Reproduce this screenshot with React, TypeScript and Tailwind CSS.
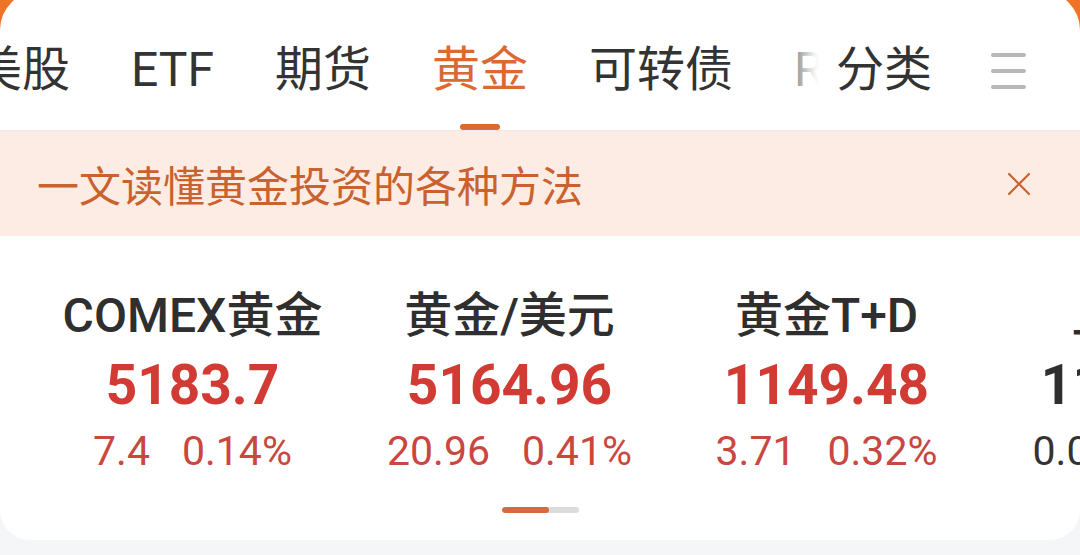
import React from 'react';

const tabs = ['美股', 'ETF', '期货', '黄金', '可转债', 'REITs'];

const quotes = [
  { name: 'COMEX黄金', price: '5183.7', change: '7.4', pct: '0.14%', up: true },
  { name: '黄金/美元', price: '5164.96', change: '20.96', pct: '0.41%', up: true },
  { name: '黄金T+D', price: '1149.48', change: '3.71', pct: '0.32%', up: true },
  { name: '上海金', price: '1150.20', change: '0.00', pct: '0.00%', up: false },
];

const font = { fontFamily: 'Roboto, "Noto Sans CJK SC", sans-serif' };

const App: React.FC = () => {
  return (
    <div
      className="h-[555px] w-[1080px] overflow-hidden bg-[linear-gradient(#ef7428_0px,#ef7428_40px,#f5f6f8_40px)]"
      style={font}
    >
      <div className="-mt-[9px] h-[549px] bg-white rounded-t-[39px] rounded-b-[30px] overflow-hidden flex flex-col">
        {/* Tabs */}
        <div className="relative h-[140px] shrink-0 border-b border-[#ececec] pt-[18px] flex items-center">
          <div className="relative w-[826px] shrink-0 overflow-hidden">
            <div className="flex items-center gap-[61px] -ml-[26px] whitespace-nowrap">
              {tabs.map((t) => {
                const active = t === '黄金';
                return (
                  <span
                    key={t}
                    className={`text-[48px] leading-[64px] ${active ? 'text-[#dc6932]' : 'text-[#333333]'}`}
                  >
                    {t}
                  </span>
                );
              })}
            </div>
            <div className="pointer-events-none absolute right-0 top-0 h-full w-[40px] bg-[linear-gradient(to_right,rgba(255,255,255,0)_0%,rgba(255,255,255,0.45)_22%,rgba(255,255,255,0.95)_72%,#ffffff_84%)]" />
          </div>
          <span className="ml-[10px] text-[48px] leading-[64px] text-[#333333]">分类</span>
          <div className="ml-[59px] flex flex-col gap-[12px] pt-[2px]">
            <span className="block h-[4px] w-[35px] rounded-full bg-[#b8b8b8]" />
            <span className="block h-[4px] w-[35px] rounded-full bg-[#b8b8b8]" />
            <span className="block h-[4px] w-[35px] rounded-full bg-[#b8b8b8]" />
          </div>
          <span className="absolute bottom-0 left-[460px] h-[6px] w-[40px] rounded-full bg-[#dc6932]" />
        </div>

        {/* Banner */}
        <div className="h-[105px] shrink-0 bg-[#fcece3] flex items-center justify-between pl-[37px] pr-[48px]">
          <span className="text-[42px] leading-none text-[#c9622f]" style={{ fontFamily: '"Noto Sans CJK SC", sans-serif' }}>
            一文读懂黄金投资的各种方法
          </span>
          <svg width="26" height="26" viewBox="0 0 26 26" fill="none">
            <path d="M3 3 L23 23 M23 3 L3 23" stroke="#c9622f" strokeWidth="2.2" strokeLinecap="round" />
          </svg>
        </div>

        {/* Quotes */}
        <div className="flex-1 flex flex-col">
          <div className="flex pl-[34px] pt-[52px] whitespace-nowrap">
            {quotes.map((q) => (
              <div key={q.name} className="w-[317px] shrink-0 flex flex-col items-center">
                <span className="text-[48px] leading-[56px] font-medium text-[#2f2f2f]">{q.name}</span>
                <span
                  className={`mt-[8px] text-[55px] leading-[66px] font-bold ${q.up ? 'text-[#d13b34]' : 'text-[#2f2f2f]'}`}
                >
                  {q.price}
                </span>
                <div
                  className={`mt-[9px] flex gap-[32px] text-[41px] leading-[48px] ${q.up ? 'text-[#c9473f]' : 'text-[#333333]'}`}
                >
                  <span>{q.change}</span>
                  <span>{q.pct}</span>
                </div>
              </div>
            ))}
          </div>
          <div className="mx-auto mt-[32px] flex h-[6px] w-[77px] overflow-hidden rounded-full bg-[#dcdcde]">
            <span className="block h-full w-[47px] rounded-full bg-[#d86a3a]" />
          </div>
        </div>
      </div>
    </div>
  );
};

export default App;
